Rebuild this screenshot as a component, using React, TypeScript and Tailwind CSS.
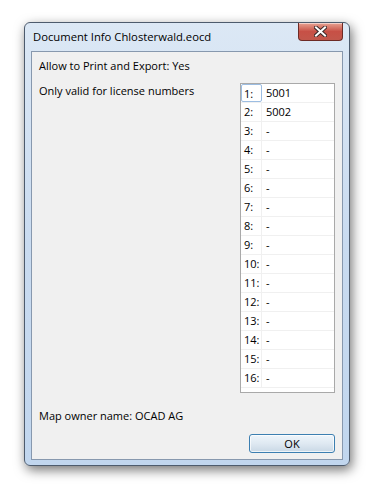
const LICENSES = ['5001', '5002', '-', '-', '-', '-', '-', '-', '-', '-', '-', '-', '-', '-', '-', '-'];

const font = { fontFamily: '"Open Sans", "Noto Sans", sans-serif' };

const CloseButton = () => (
  <div className="flex h-[18px] w-[45px] items-center justify-center rounded-b-[4px] border border-t-0 border-[#6d2a25] bg-gradient-to-b from-[#e7a293] via-[#c75046] to-[#c2574b] shadow-[inset_0_1px_0_rgba(255,255,255,0.5)]">
    <svg width="13" height="11" viewBox="0 0 13 11">
      <path d="M2 1.5 L11 9.5 M11 1.5 L2 9.5" stroke="#3b2a2a" strokeWidth="4" strokeLinecap="square" />
      <path d="M2 1.5 L11 9.5 M11 1.5 L2 9.5" stroke="#ffffff" strokeWidth="2" strokeLinecap="square" />
    </svg>
  </div>
);

export default function App() {
  return (
    <div className="h-[494px] w-[381px] bg-white pl-[24px] pt-[22px]" style={font}>
      <div className="flex h-[444px] w-[326px] flex-col rounded-[6px] border border-[#4d5b6d] bg-gradient-to-b from-[#dce8f5] via-[#c9dbf0] to-[#c1d6ee] px-[6px] pb-[5px] shadow-[2px_4px_12px_rgba(0,0,0,0.55)]">
        <div className="flex h-[28px] items-start justify-between">
          <span className="pl-[2px] pt-[6px] text-[11.25px] leading-[16px] text-black">Document Info Chlosterwald.eocd</span>
          <CloseButton />
        </div>
        <div className="flex flex-1 flex-col border border-[#8798ae] bg-[#f0f0f0] px-[7px] pt-[6px] text-[11px] leading-[16px] text-black">
          <div>Allow to Print and Export: Yes</div>
          <div className="mt-[9px] flex justify-between">
            <div>Only valid for license numbers</div>
            <div className="h-[310px] w-[95px] border border-[#a9a9a9] bg-white">
              {LICENSES.map((v, i) => (
                <div key={i} className="flex h-[19px] border-b border-[#f0f0f0]">
                  <div
                    className={
                      i === 0
                        ? 'w-[21px] rounded-[2px] border border-[#9cbde2] pl-[2px] leading-[17px]'
                        : 'w-[21px] border-r border-[#f0f0f0] pl-[3px] leading-[18px]'
                    }
                  >
                    {i + 1}:
                  </div>
                  <div className="pl-[4px] leading-[18px]">{v}</div>
                </div>
              ))}
            </div>
          </div>
          <div className="mt-[15px]">Map owner name: OCAD AG</div>
          <div className="mt-[10px] flex justify-end">
            <button className="h-[19px] w-[86px] rounded-[3px] border border-[#3c7fb1] bg-gradient-to-b from-[#eef5fb] via-[#dfe9f2] to-[#c9d8e5] text-[11px] leading-[16px] text-black shadow-[inset_0_0_0_1px_rgba(255,255,255,0.7)]">
              OK
            </button>
          </div>
        </div>
      </div>
    </div>
  );
}
